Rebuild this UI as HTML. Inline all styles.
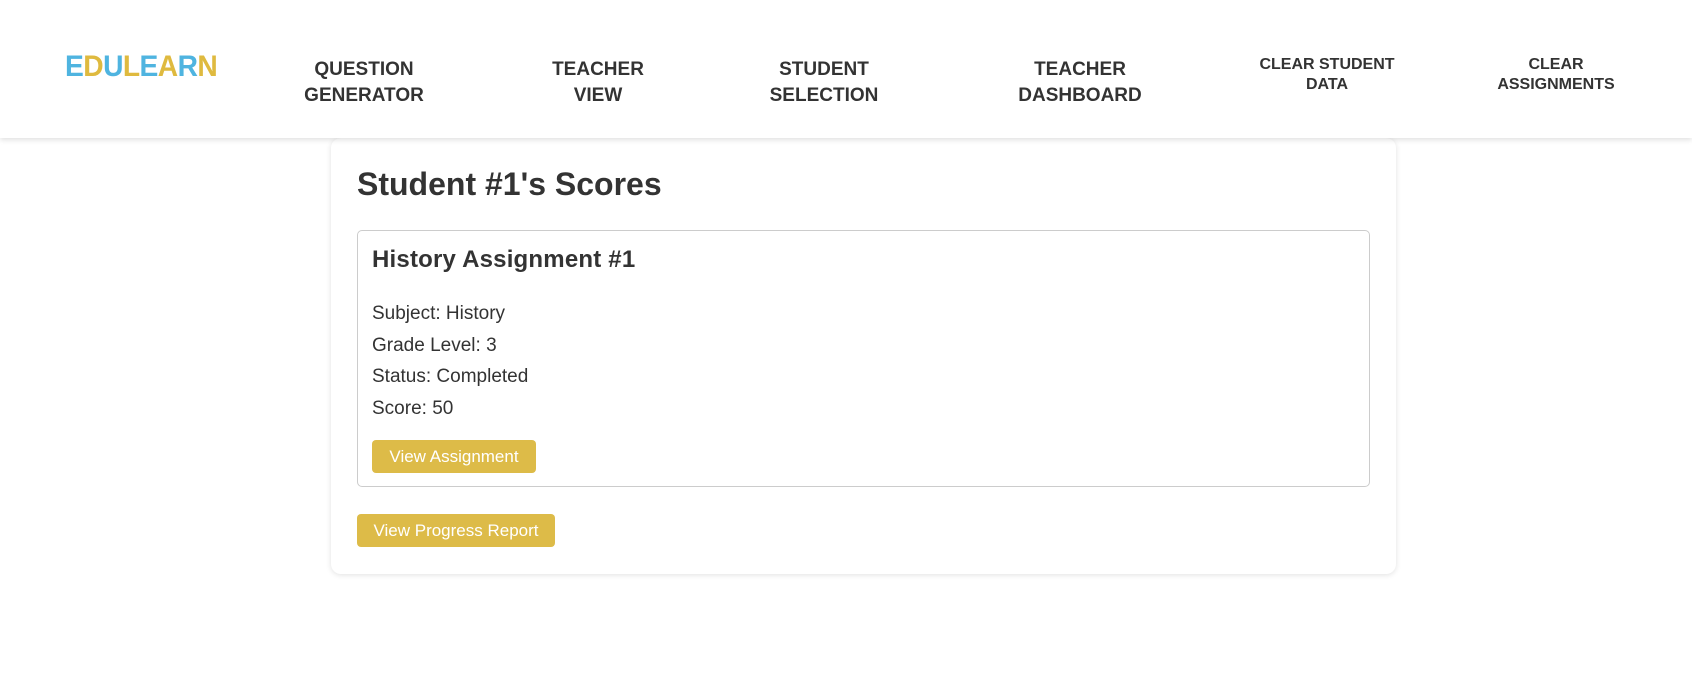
<!DOCTYPE html>
<html><head><style>
body{margin:0;width:1692px;height:686px;background:#fff;font-family:"Liberation Sans",sans-serif;color:#333;position:relative;overflow:hidden}
.hdr{position:absolute;left:0;top:0;width:1692px;height:138px;background:#fff;box-shadow:0 2px 5px rgba(0,0,0,0.12);z-index:2}
.logo{position:absolute;left:65px;top:50px;font-size:30px;font-weight:bold;letter-spacing:-0.6px;transform:scaleX(0.94);transform-origin:left}
.b{color:#4fb4e0}.y{color:#dfba3f}
.nav{position:absolute;text-align:center;font-weight:bold;font-size:19px;line-height:26px;transform:translateX(-50%);white-space:nowrap}
.nav.s{font-size:16px;line-height:20px}
.card{position:absolute;left:331px;top:138px;width:1065px;height:436px;background:#fff;border-radius:10px;box-shadow:0 1px 6px rgba(0,0,0,0.12);z-index:1}
h1{position:absolute;left:26px;top:28px;margin:0;font-size:32px}
.box{position:absolute;left:26px;top:92px;width:1011px;height:255px;border:1px solid #ccc;border-radius:5px}
h2{position:absolute;left:14px;top:15px;margin:0;font-size:24px;letter-spacing:0.2px}
.lines{position:absolute;left:14px;top:67px;font-size:19px;line-height:31.5px}
.btn{position:absolute;background:#ddbb48;color:#fff;border-radius:4px;font-size:17px;text-align:center;line-height:33px;height:33px}
</style></head><body>
<div class="hdr">
<div class="logo"><span class="b">E</span><span class="y">D</span><span class="b">U</span><span class="y">L</span><span class="b">E</span><span class="y">A</span><span class="b">R</span><span class="y">N</span></div>
<div class="nav" style="left:364px;top:57px">QUESTION<br>GENERATOR</div>
<div class="nav" style="left:598px;top:57px">TEACHER<br>VIEW</div>
<div class="nav" style="left:824px;top:57px">STUDENT<br>SELECTION</div>
<div class="nav" style="left:1080px;top:57px">TEACHER<br>DASHBOARD</div>
<div class="nav s" style="left:1327px;top:55px">CLEAR STUDENT<br>DATA</div>
<div class="nav s" style="left:1556px;top:55px">CLEAR<br>ASSIGNMENTS</div>
</div>
<div class="card">
<h1>Student #1's Scores</h1>
<div class="box">
<h2>History Assignment #1</h2>
<div class="lines">Subject: History<br>Grade Level: 3<br>Status: Completed<br>Score: 50</div>
<div class="btn" style="left:14px;top:209px;width:164px">View Assignment</div>
</div>
<div class="btn" style="left:26px;top:376px;width:198px">View Progress Report</div>
</div>
</body></html>
